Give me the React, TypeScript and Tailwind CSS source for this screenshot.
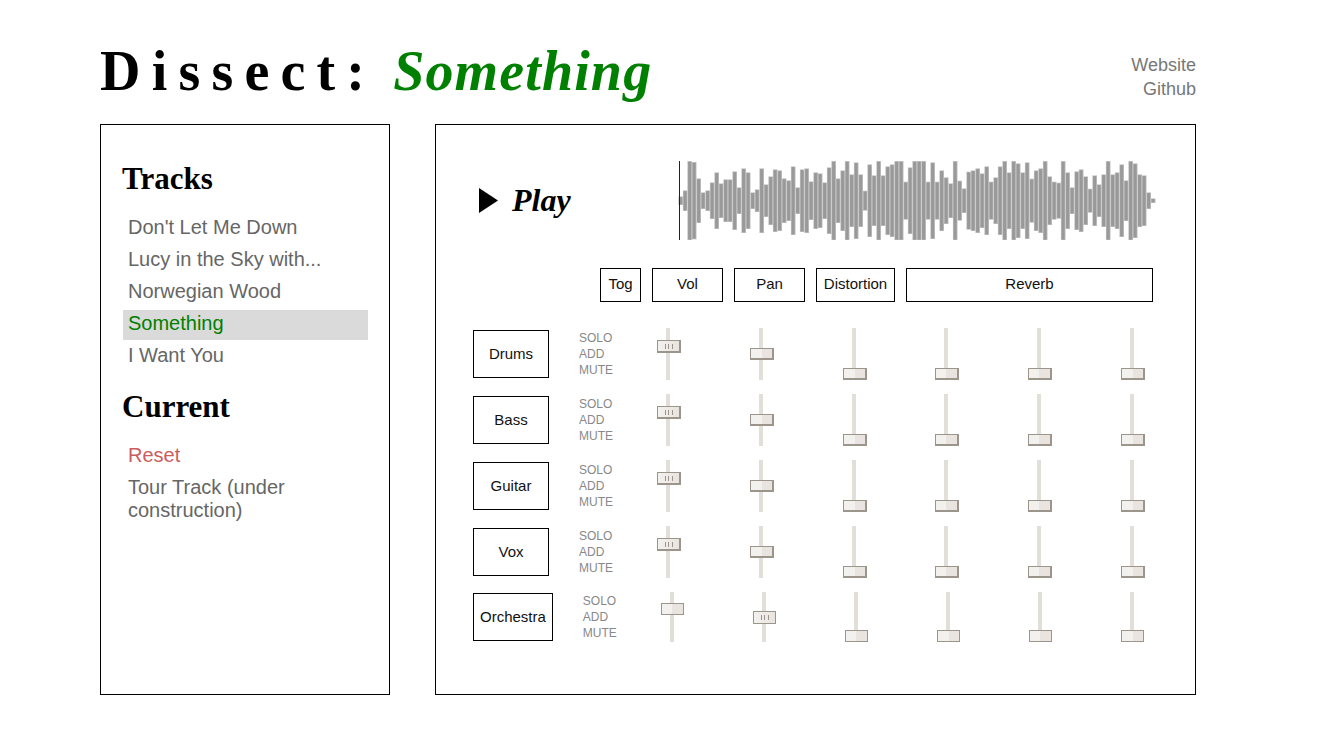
import { useState } from "react";

const TRACKS = ["Don't Let Me Down", "Lucy in the Sky with...", "Norwegian Wood", "Something", "I Want You"];
const MODES = ["SOLO", "ADD", "MUTE"];
const EFFECTS = ["Volume", "Pan", "Distortion", "Reverb level", "Reverb time", "Reverb tone"];

type Channel = { name: string; levels: number[]; grip: number; flat?: boolean };

const CHANNELS: Channel[] = [
  { name: "Drums", levels: [70, 50, 0, 0, 0, 0], grip: 0 },
  { name: "Bass", levels: [70, 50, 0, 0, 0, 0], grip: 0 },
  { name: "Guitar", levels: [70, 50, 0, 0, 0, 0], grip: 0 },
  { name: "Vox", levels: [70, 50, 0, 0, 0, 0], grip: 0 },
  { name: "Orchestra", levels: [70, 50, 0, 0, 0, 0], grip: 1, flat: true },
];

// Amplitude of each waveform bar, in thirds of a pixel from the centre line.
const PEAKS = [
  12, 30, 118, 115, 66, 24, 30, 54, 84, 51, 63, 63, 87, 39, 96, 84, 24, 33, 96, 48, 72, 93, 90, 66, 60, 102, 39, 93,
  96, 57, 84, 81, 54, 99, 118, 66, 90, 118, 78, 114, 78, 29, 108, 75, 118, 75, 102, 108, 118, 118, 56, 99, 118, 118,
  118, 56, 114, 56, 90, 69, 51, 118, 59, 36, 86, 90, 96, 81, 102, 56, 69, 102, 118, 84, 118, 111, 84, 114, 65, 90, 96,
  118, 72, 56, 53, 118, 84, 39, 87, 93, 72, 35, 75, 48, 78, 118, 78, 84, 108, 60, 118, 111, 78, 75, 24, 6,
];

const item = "mb-[2px] block w-full px-[5px] pt-[2px] pb-[5px] text-left text-[20px] leading-[23px]";
const heading = "-ml-px mb-[17px] font-['Liberation_Serif',serif] text-[31px] leading-[36px] font-bold text-black";

const slider =
  "m-0 w-6 cursor-pointer appearance-none bg-[linear-gradient(#e2ded8,#e2ded8)] bg-[length:4px_100%] bg-[position:9px_0] bg-no-repeat [direction:rtl] [writing-mode:vertical-lr] [&::-webkit-slider-thumb]:appearance-none [&::-webkit-slider-thumb]:border [&::-webkit-slider-thumb]:border-[#9c958c]";
const raised =
  "h-[52px] [&::-webkit-slider-thumb]:w-6 [&::-webkit-slider-thumb]:border-r-2 [&::-webkit-slider-thumb]:border-b-2";
const flat = "h-[50px] [&::-webkit-slider-thumb]:w-[23px]";
const plainThumb =
  "[&::-webkit-slider-thumb]:h-[12px] [&::-webkit-slider-thumb]:bg-[linear-gradient(90deg,#f3f1ee_50%,#e9e4e0_50%)]";
const grippedThumb =
  "[&::-webkit-slider-thumb]:h-[13px] [&::-webkit-slider-thumb]:bg-[linear-gradient(#9c958c,#9c958c),linear-gradient(#9c958c,#9c958c),linear-gradient(#9c958c,#9c958c),linear-gradient(90deg,#f3f1ee,#e9e4e0)] [&::-webkit-slider-thumb]:bg-[length:1px_5px,1px_5px,1px_5px,100%_100%] [&::-webkit-slider-thumb]:bg-[position:7px_3px,10px_3px,14px_3px,0_0] [&::-webkit-slider-thumb]:bg-no-repeat";

function Waveform() {
  return (
    <svg className="h-[79px] min-w-0 flex-1" viewBox="0 0 479 79" preserveAspectRatio="none" aria-hidden="true">
      {PEAKS.map((p, i) => {
        const x = 0.4 + i * 4.5;
        const h = p / 3;
        return (
          <g key={i}>
            <rect x={x} y={39.4 - h} width="4.6" height={h * 2 + 0.6} fill="#c0c0c0" />
            <rect x={x + 0.7} y={40.1 - h} width="3.1" height={Math.max(h * 2 - 0.8, 2)} fill="#999" />
          </g>
        );
      })}
      <rect x="1" y="0" width="1" height="79" fill="#222" />
    </svg>
  );
}

function ColumnLabel({ text, width }: { text: string; width: string }) {
  return (
    <div className={`border border-black pt-[5px] pb-[7px] text-center text-[15px] leading-[20px] text-[#111] ${width}`}>
      {text}
    </div>
  );
}

function ChannelRow({ channel }: { channel: Channel }) {
  const [levels, setLevels] = useState(channel.levels);
  return (
    <div className="flex items-center">
      <div className="min-w-[76px] border border-black px-[6px] py-3 text-center text-[15px] leading-[22px] text-[#111]">
        {channel.name}
      </div>
      <div className="ml-[30px] flex w-9 flex-col items-start text-[12px] leading-[16px] text-[#888]">
        {MODES.map((m) => (
          <button key={m} type="button">
            {m}
          </button>
        ))}
      </div>
      <div className="mr-2 ml-[42px] flex flex-1 justify-between">
        {EFFECTS.map((effect, i) => (
          <input
            key={effect}
            type="range"
            min={0}
            max={100}
            aria-label={`${channel.name} ${effect}`}
            value={levels[i]}
            onChange={(e) => setLevels(levels.map((l, j) => (j === i ? Number(e.target.value) : l)))}
            className={`${slider} ${channel.flat ? flat : raised} ${i === channel.grip ? grippedThumb : plainThumb}`}
          />
        ))}
      </div>
    </div>
  );
}

export default function App() {
  const [current, setCurrent] = useState("Something");
  return (
    <div className="min-h-screen bg-white pt-10 pr-[129px] pb-10 pl-[100px] font-['Liberation_Sans',Arial,sans-serif] text-black">
      <header className="mb-[22px] flex items-end justify-between">
        <h1 className="flex gap-[17px] font-['Liberation_Serif',serif] text-[56px] leading-[62px] font-bold">
          <span className="tracking-[0.2em]">Dissect:</span>
          <em className="tracking-[0.02em] text-[#008000]">{current}</em>
        </h1>
        <nav className="flex flex-col items-end pb-px text-[18px] leading-[24px] text-[#777]">
          <a href="#website">Website</a>
          <a href="#github">Github</a>
        </nav>
      </header>

      <div className="flex gap-[45px]">
        <aside className="w-[290px] shrink-0 border border-black pt-9 pr-[21px] pb-6 pl-[22px] text-[#666]">
          <h2 className={heading}>Tracks</h2>
          {TRACKS.map((t) => (
            <button
              key={t}
              type="button"
              onClick={() => setCurrent(t)}
              className={`${item} ${t === current ? "bg-[#dadada] text-[#008000]" : ""}`}
            >
              {t}
            </button>
          ))}
          <h2 className={`mt-[17px] ${heading}`}>Current</h2>
          <button type="button" className={`${item} text-[#cd5c5c]`}>
            Reset
          </button>
          <button type="button" className={item}>
            Tour Track (under construction)
          </button>
        </aside>

        <main className="min-w-0 flex-1 border border-black pt-9 pr-[42px] pb-[52px] pl-[37px]">
          <div className="-mr-1 flex items-center">
            <div className="w-[205px] shrink-0 pl-[6px]">
              <button
                type="button"
                className="flex items-center gap-[14px] font-['Liberation_Serif',serif] text-[32px] leading-[36px] font-bold italic"
              >
                <svg className="h-[25px] w-[19px]" viewBox="0 0 19 25" aria-hidden="true">
                  <path d="M0 0L19 12.5L0 25Z" fill="#000" />
                </svg>
                <span className="pb-[2px]">Play</span>
              </button>
            </div>
            <Waveform />
          </div>

          <div className="mt-7 flex gap-[11px] pl-[127px]">
            <ColumnLabel text="Tog" width="w-[41px]" />
            <ColumnLabel text="Vol" width="w-[71px]" />
            <ColumnLabel text="Pan" width="w-[71px]" />
            <ColumnLabel text="Distortion" width="w-[79px]" />
            <ColumnLabel text="Reverb" width="flex-1" />
          </div>

          <div className="mt-[26px] flex flex-col gap-[14px]">
            {CHANNELS.map((c) => (
              <ChannelRow key={c.name} channel={c} />
            ))}
          </div>
        </main>
      </div>
    </div>
  );
}
